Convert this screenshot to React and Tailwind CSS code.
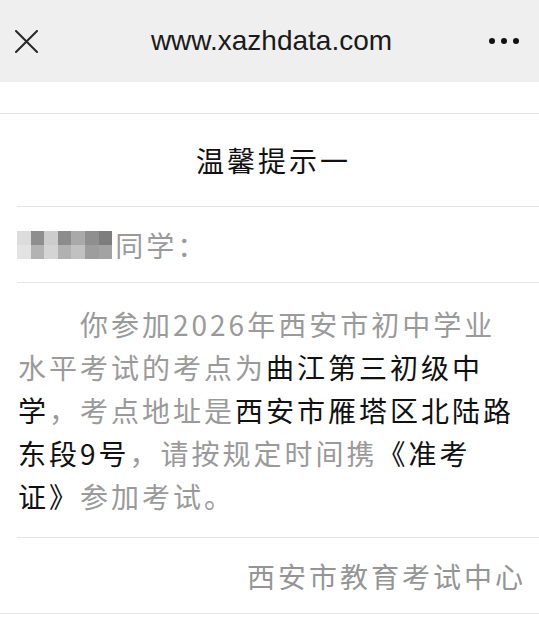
import React from 'react';

const mosaic = [
  ['#dcdcdc', '#8e8e8e', '#cdcdcd', '#8c8c8c', '#a9a9a9', '#8f8f8f', '#7d7d7d'],
  ['#e3e3e3', '#b3b3b3', '#d4d4d4', '#b1b1b1', '#c1c1c1', '#9d9d9d', '#a3a3a3'],
];

function Header() {
  return (
    <div className="h-[82px] bg-[#efefef] grid grid-cols-[1fr_auto_1fr] items-center tracking-normal">
      <div className="pl-[15px] flex items-center">
        <svg width="23" height="23" viewBox="0 0 23 23" fill="none">
          <path d="M1 1 L22 22 M22 1 L1 22" stroke="#262626" strokeWidth="2" strokeLinecap="round" />
        </svg>
      </div>
      <div className="font-['Liberation_Sans',Arial,sans-serif] text-[28px] text-[#1a1a1a] pl-[4px]">
        www.xazhdata.com
      </div>
      <div className="flex justify-end items-center gap-[6px] pr-[20px]">
        <span className="w-[6px] h-[6px] rounded-full bg-[#111]" />
        <span className="w-[6px] h-[6px] rounded-full bg-[#111]" />
        <span className="w-[6px] h-[6px] rounded-full bg-[#111]" />
      </div>
    </div>
  );
}

function Mosaic() {
  return (
    <div className="flex flex-col mr-[3px]">
      {mosaic.map((row, i) => (
        <div key={i} className="flex">
          {row.map((c, j) => (
            <div key={j} className="w-[13.6px] h-[14px]" style={{ backgroundColor: c }} />
          ))}
        </div>
      ))}
    </div>
  );
}

export default function App() {
  const gray = 'text-[#9a9a9a]';
  const dark = 'text-[#111]';
  return (
    <div className="w-[539px] h-[640px] bg-white font-['Noto_Sans_CJK_SC','Noto_Sans',sans-serif] text-[28px] tracking-[3px] overflow-hidden">
      <Header />
      <div className="h-[32px] border-b border-[#e6e6e6]" />

      <div className="ml-[17px] h-[93px] border-b border-[#e6e6e6] flex items-center justify-center pr-[9px] text-[#111]">
        温馨提示一
      </div>

      <div className="ml-[17px] h-[76px] border-b border-[#e6e6e6] flex items-center">
        <Mosaic />
        <span className={gray}>同学：</span>
      </div>

      <div className="ml-[17px] h-[255px] border-b border-[#e6e6e6] pt-[20px] pr-[15px] pl-[1px]">
        <p className="leading-[43px] indent-[62px]">
          <span className={gray}>你参加2026年西安市初中学业水平考试的考点为</span>
          <span className={dark}>曲江第三初级中学</span>
          <span className={gray}>，考点地址是</span>
          <span className={dark}>西安市雁塔区北陆路东段9号</span>
          <span className={gray}>，请按规定时间携</span>
          <span className={dark}>《准考</span>
          <span className={dark}>证》</span>
          <span className={gray}>参加考试。</span>
        </p>
      </div>

      <div className="h-[76px] border-b border-[#e6e6e6] flex items-center justify-end pr-[13px] text-[#959595]">
        西安市教育考试中心
      </div>
    </div>
  );
}
